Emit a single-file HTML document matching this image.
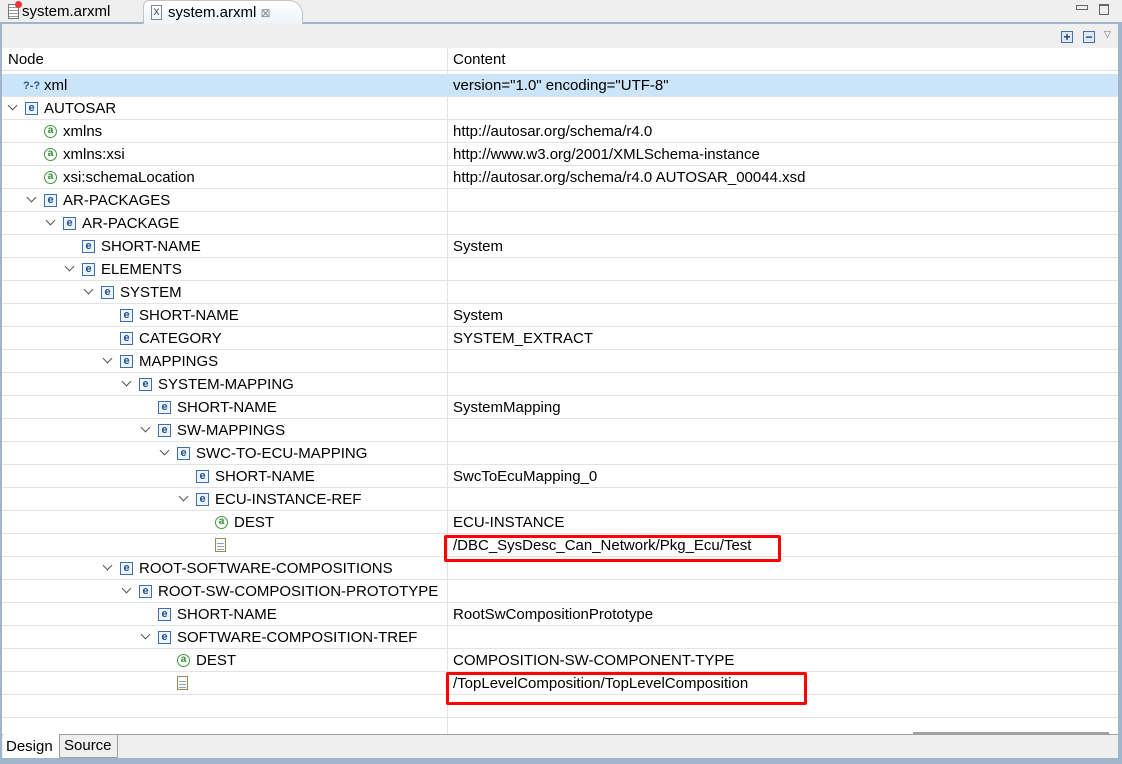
<!DOCTYPE html>
<html><head><meta charset="utf-8"><style>
*{margin:0;padding:0;box-sizing:border-box}
body{width:1122px;height:764px;overflow:hidden;background:#fff;font-family:"Liberation Sans",sans-serif;font-size:15px;color:#000;position:relative}
i{display:block;font-style:normal}
.top{position:absolute;left:0;top:0;width:1122px;height:24px;background:#efefef;border-bottom:2px solid #9fb5cc}
.tab1{position:absolute;left:2px;top:0;height:22px;padding-left:20px;line-height:24px}
.tab2{position:absolute;left:143px;top:0;width:160px;height:24px;border:1px solid #c4c4c4;border-bottom:none;border-radius:6px 14px 0 0;line-height:24px;padding-left:24px;background:linear-gradient(#fff,#eef3f9)}
.frame{position:absolute;left:0;top:24px;width:1122px;height:740px;border-left:2px solid #9fb5cc;border-right:4px solid #9fb5cc;border-bottom:6px solid #9fb5cc;background:#efefef}
.tree{position:absolute;left:2px;top:48px;width:1116px;height:686px;background:#fff}
.row{position:absolute;left:0;width:1116px;height:23px;border-bottom:1px solid #e3e3e3;line-height:24px}
.row.sel{background:#cce4f7}
.w{position:absolute;top:0;height:22px;width:400px}
.tw{position:absolute;left:7px;top:5px;width:7px;height:7px;border-right:1.3px solid #555;border-bottom:1.3px solid #555;transform:rotate(45deg)}
.ie{position:absolute;left:23px;top:5px;width:13px;height:13px;border:1px solid #3d6fa8;background:#eef4fb;font-size:11px;line-height:11px;text-align:center;color:#1f4f8f;font-weight:bold}
.ia{position:absolute;left:23px;top:5px;width:13px;height:13px;border:1.5px solid #3a9a3a;border-radius:50%;font-size:10px;line-height:10px;text-align:center;color:#2d8a2d;font-weight:bold}
.id{position:absolute;left:23px;top:4px;width:11px;height:14px;border:1px solid #9a8a5a;background-color:#fbfbf2;background-image:repeating-linear-gradient(#fbfbf2 0 2px,#8ea2c8 2px 3px);background-size:7px 9px;background-position:1px 2px;background-repeat:no-repeat}
.n{position:absolute;left:42px;top:0;white-space:nowrap}
.c{position:absolute;left:451px;top:0;white-space:nowrap}
.vl{position:absolute;left:445px;top:0;width:1px;height:686px;background:#e3e3e3}
.red{position:absolute;border:3px solid #f00;border-radius:2px}
</style></head><body>
<div class="top">
<div class="tab1"><span style="position:absolute;left:6px;top:4px;width:11px;height:15px;border:1px solid #777;background:repeating-linear-gradient(#fff 0 2px,#999 2px 3px)"></span><span style="position:absolute;left:13px;top:1px;width:7px;height:7px;border-radius:50%;background:#e33"></span>system.arxml</div>
<div class="tab2"><span style="position:absolute;left:7px;top:4px;width:11px;height:15px;border:1px solid #888;font-size:9px;line-height:13px;text-align:center;color:#335">X</span>system.arxml <span style="color:#888;font-size:12px">⊠</span></div>
<div style="position:absolute;left:1076px;top:5px;width:12px;height:5px;border:1px solid #666"></div>
<div style="position:absolute;left:1099px;top:4px;width:10px;height:11px;border:1px solid #666;border-top-width:2px"></div>
</div>
<div class="frame"></div>
<div style="position:absolute;left:1061px;top:31px;width:12px;height:12px;border:1px solid #4a6f9a;background:#dfe9f5;font-size:12px;line-height:10px;text-align:center;color:#1a3f6a;font-weight:bold">+</div>
<div style="position:absolute;left:1083px;top:31px;width:12px;height:12px;border:1px solid #4a6f9a;background:#dfe9f5;font-size:12px;line-height:10px;text-align:center;color:#1a3f6a;font-weight:bold">−</div>
<div style="position:absolute;left:1104px;top:29px;font-size:9px;color:#777">▽</div>
<div class="tree">
<div class="row" style="top:0"><span style="position:absolute;left:6px">Node</span><span class="c">Content</span></div>
<div class="vl"></div>
<div class="row sel" style="top:26px"><div class="w" style="left:0"><span style="position:absolute;left:21px;top:0;font-size:11px;color:#2b5a94;font-weight:bold;white-space:nowrap">?-?</span><span class="n">xml</span></div><span class="c">version="1.0" encoding="UTF-8"</span></div>
<div class="row" style="top:49px"><div class="w" style="left:0"><i class="tw"></i><i class="ie">e</i><span class="n">AUTOSAR</span></div></div>
<div class="row" style="top:72px"><div class="w" style="left:19px"><i class="ia">a</i><span class="n">xmlns</span></div><span class="c">http://autosar.org/schema/r4.0</span></div>
<div class="row" style="top:95px"><div class="w" style="left:19px"><i class="ia">a</i><span class="n">xmlns:xsi</span></div><span class="c">http://www.w3.org/2001/XMLSchema-instance</span></div>
<div class="row" style="top:118px"><div class="w" style="left:19px"><i class="ia">a</i><span class="n">xsi:schemaLocation</span></div><span class="c">http://autosar.org/schema/r4.0 AUTOSAR_00044.xsd</span></div>
<div class="row" style="top:141px"><div class="w" style="left:19px"><i class="tw"></i><i class="ie">e</i><span class="n">AR-PACKAGES</span></div></div>
<div class="row" style="top:164px"><div class="w" style="left:38px"><i class="tw"></i><i class="ie">e</i><span class="n">AR-PACKAGE</span></div></div>
<div class="row" style="top:187px"><div class="w" style="left:57px"><i class="ie">e</i><span class="n">SHORT-NAME</span></div><span class="c">System</span></div>
<div class="row" style="top:210px"><div class="w" style="left:57px"><i class="tw"></i><i class="ie">e</i><span class="n">ELEMENTS</span></div></div>
<div class="row" style="top:233px"><div class="w" style="left:76px"><i class="tw"></i><i class="ie">e</i><span class="n">SYSTEM</span></div></div>
<div class="row" style="top:256px"><div class="w" style="left:95px"><i class="ie">e</i><span class="n">SHORT-NAME</span></div><span class="c">System</span></div>
<div class="row" style="top:279px"><div class="w" style="left:95px"><i class="ie">e</i><span class="n">CATEGORY</span></div><span class="c">SYSTEM_EXTRACT</span></div>
<div class="row" style="top:302px"><div class="w" style="left:95px"><i class="tw"></i><i class="ie">e</i><span class="n">MAPPINGS</span></div></div>
<div class="row" style="top:325px"><div class="w" style="left:114px"><i class="tw"></i><i class="ie">e</i><span class="n">SYSTEM-MAPPING</span></div></div>
<div class="row" style="top:348px"><div class="w" style="left:133px"><i class="ie">e</i><span class="n">SHORT-NAME</span></div><span class="c">SystemMapping</span></div>
<div class="row" style="top:371px"><div class="w" style="left:133px"><i class="tw"></i><i class="ie">e</i><span class="n">SW-MAPPINGS</span></div></div>
<div class="row" style="top:394px"><div class="w" style="left:152px"><i class="tw"></i><i class="ie">e</i><span class="n">SWC-TO-ECU-MAPPING</span></div></div>
<div class="row" style="top:417px"><div class="w" style="left:171px"><i class="ie">e</i><span class="n">SHORT-NAME</span></div><span class="c">SwcToEcuMapping_0</span></div>
<div class="row" style="top:440px"><div class="w" style="left:171px"><i class="tw"></i><i class="ie">e</i><span class="n">ECU-INSTANCE-REF</span></div></div>
<div class="row" style="top:463px"><div class="w" style="left:190px"><i class="ia">a</i><span class="n">DEST</span></div><span class="c">ECU-INSTANCE</span></div>
<div class="row" style="top:486px"><div class="w" style="left:190px"><i class="id"></i></div><span class="c">/DBC_SysDesc_Can_Network/Pkg_Ecu/Test</span></div>
<div class="row" style="top:509px"><div class="w" style="left:95px"><i class="tw"></i><i class="ie">e</i><span class="n">ROOT-SOFTWARE-COMPOSITIONS</span></div></div>
<div class="row" style="top:532px"><div class="w" style="left:114px"><i class="tw"></i><i class="ie">e</i><span class="n">ROOT-SW-COMPOSITION-PROTOTYPE</span></div></div>
<div class="row" style="top:555px"><div class="w" style="left:133px"><i class="ie">e</i><span class="n">SHORT-NAME</span></div><span class="c">RootSwCompositionPrototype</span></div>
<div class="row" style="top:578px"><div class="w" style="left:133px"><i class="tw"></i><i class="ie">e</i><span class="n">SOFTWARE-COMPOSITION-TREF</span></div></div>
<div class="row" style="top:601px"><div class="w" style="left:152px"><i class="ia">a</i><span class="n">DEST</span></div><span class="c">COMPOSITION-SW-COMPONENT-TYPE</span></div>
<div class="row" style="top:624px"><div class="w" style="left:152px"><i class="id"></i></div><span class="c">/TopLevelComposition/TopLevelComposition</span></div>
<div class="row" style="top:647px"></div>
</div>
<div style="position:absolute;left:2px;top:734px;width:1116px;height:24px;background:#efefef;border-top:1px solid #a0a0a0"></div>
<div style="position:absolute;left:913px;top:732px;width:196px;height:2px;background:#a0a0a0"></div>
<div style="position:absolute;left:3px;top:734px;width:56px;height:24px;background:#fff;line-height:25px;padding-left:3px">Design</div>
<div style="position:absolute;left:59px;top:734px;width:59px;height:24px;border:1px solid #a0a0a0;border-top:none;line-height:24px;padding-left:4px">Source</div>
<div class="red" style="left:444px;top:535px;width:337px;height:27px"></div>
<div class="red" style="left:446px;top:672px;width:361px;height:33px"></div>
</body></html>
